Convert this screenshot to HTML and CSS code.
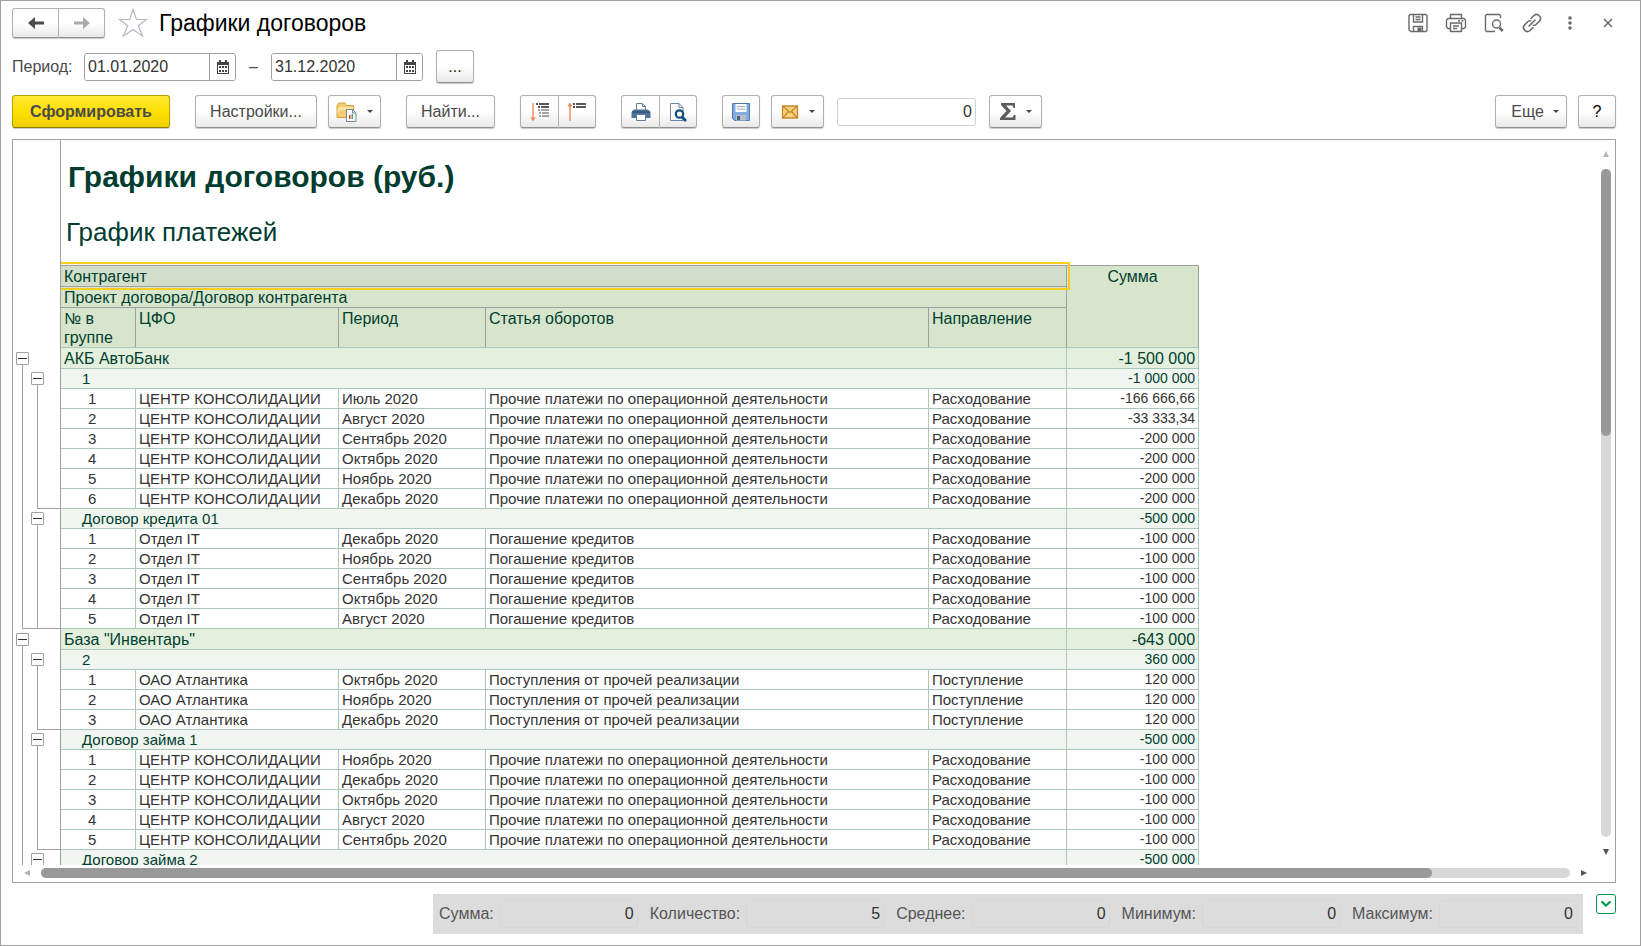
FILE: index.html
```html
<!DOCTYPE html>
<html lang="ru">
<head>
<meta charset="utf-8">
<title>Графики договоров</title>
<link rel="stylesheet" href="styles.css">
</head>
<body>
<main class="window">
  <header class="titlebar">
    <div class="btn-group nav">
      <button class="btn" type="button" aria-label="Назад"><svg width="18" height="14" viewBox="0 0 18 14"><path d="M1 7 8 1v4.500h9v3H8V13z" fill="#4a4a4a"/></svg></button>
      <button class="btn" type="button" aria-label="Вперед"><svg width="18" height="14" viewBox="0 0 18 14"><path d="M17 7 10 1v4.500H1v3h9V13z" fill="#ababab"/></svg></button>
    </div>
    <button class="icon-btn star" type="button" aria-label="Избранное"><svg width="30" height="30" viewBox="0 0 30 30"><path d="m15 1.500 3.400 10H28.500l-8.200 6.200 4.200 10.300-9.500-6.500-9.500 6.500 4.200-10.300L1.500 11.500h10.100z" fill="#fff" stroke="#b4bac2" stroke-width="1.200"/></svg></button>
    <h1 class="caption">Графики договоров</h1>
    <div class="window-tools">
      <button class="icon-btn" type="button" aria-label="Сохранить"><svg width="20" height="20" viewBox="0 0 20 20" fill="none" stroke="#6a6a6a" stroke-width="1.400"><path d="M2 1.500h16l1 1v15l-1 1H3l-2-1.500V2.500zM5.500 1.500v7.500h9V1.500M7.500 4h5M7.500 6.500h5M5.500 18.500v-5h9v5"/><path d="M9.500 14.500h4v3.500h-4z" fill="#6a6a6a" stroke="none"/></svg></button>
      <button class="icon-btn" type="button" aria-label="Печать"><svg width="22" height="20" viewBox="0 0 22 20" fill="none" stroke="#6a6a6a" stroke-width="1.400"><path d="M5.500 5.500v-4h11v4M5 15.500H3L1.500 14V7L3 5.500h16L20.500 7v7L19 15.500h-2M5.500 10h11v8.500h-11zM8 13h6M8 15.500h4M13 7.700h2M16.500 7.700h2"/></svg></button>
      <button class="icon-btn" type="button" aria-label="Предварительный просмотр"><svg width="20" height="20" viewBox="0 0 20 20" fill="none" stroke="#6a6a6a" stroke-width="1.400"><path d="M16.500 5v-2.500l-1-1H2.500l-1 1v15l1 1H11"/><circle cx="12.500" cy="11" r="4"/><path d="m15.500 14.500 3.200 3.500" stroke-width="2.600"/></svg></button>
      <button class="icon-btn" type="button" aria-label="Ссылка"><svg width="20" height="20" viewBox="0 0 20 20" fill="none" stroke="#6a6a6a" stroke-width="1.600" stroke-linecap="round"><path d="m7 13 6-6M9 5.500l3-3a3.900 3.900 0 0 1 5.500 5.500l-3.500 3.500a3 3 0 0 1-2.500.7M11 14.500l-3 3A3.900 3.900 0 0 1 2.500 12L6 8.500a3 3 0 0 1 2.500-.7"/></svg></button>
      <button class="icon-btn" type="button" aria-label="Меню"><svg width="6" height="16" viewBox="0 0 6 16" fill="#6a6a6a"><circle cx="3" cy="3" r="1.800"/><circle cx="3" cy="8" r="1.800"/><circle cx="3" cy="13" r="1.800"/></svg></button>
      <button class="icon-btn" type="button" aria-label="Закрыть"><svg width="10" height="10" viewBox="0 0 10 10" stroke="#6a6a6a" stroke-width="1.500"><path d="m1 1 8 8M9 1 1 9"/></svg></button>
    </div>
  </header>

  <div class="period">
    <label class="period-label" for="date-from">Период:</label>
    <div class="date-field">
      <input id="date-from" type="text" value="01.01.2020">
      <button type="button" aria-label="Выбрать начало периода"><svg width="12" height="14" viewBox="0 0 12 14"><path d="M0 2h12v12H0zM2 0h2v2H2zM8 0h2v2H8z" fill="#444"/><path d="M1 5h10v8H1z" fill="#fff"/><path d="M2 6h2v2H2zM5 6h2v2H5zM8 6h2v2H8zM2 10h2v2H2zM5 10h2v2H5zM8 10h2v2H8z" fill="#444"/></svg></button>
    </div>
    <span class="dash">–</span>
    <div class="date-field">
      <input id="date-to" type="text" value="31.12.2020" aria-label="Конец периода">
      <button type="button" aria-label="Выбрать конец периода"><svg width="12" height="14" viewBox="0 0 12 14"><path d="M0 2h12v12H0zM2 0h2v2H2zM8 0h2v2H8z" fill="#444"/><path d="M1 5h10v8H1z" fill="#fff"/><path d="M2 6h2v2H2zM5 6h2v2H5zM8 6h2v2H8zM2 10h2v2H2zM5 10h2v2H5zM8 10h2v2H8z" fill="#444"/></svg></button>
    </div>
    <button class="btn square more-dates" type="button">...</button>
  </div>

  <div class="toolbar">
    <button class="btn primary" type="button">Сформировать</button>
    <div class="tool-set">
      <button class="btn settings" type="button">Настройки...</button>
      <button class="btn drop" type="button" aria-label="Варианты отчета"><svg width="21" height="20" viewBox="0 0 21 20"><path d="M1 3.500 3 1h6l1.500 2.500H17.500V15.500H1z" fill="#f3cb70" stroke="#d0a040"/><path d="M1.500 7 4 5h13v3H4l-2.500 5z" fill="#fbe3a4"/><path d="M10.500 7.500h6l3.500 3.500v8.500h-9.500z" fill="#fff" stroke="#6c87a6"/><path d="M16.500 7.500V11H20" fill="none" stroke="#6c87a6"/><path d="M13 13h1.500v4H13z" fill="#e0352f"/><path d="M15.500 12H17v5h-1.500z" fill="#4fa14f"/></svg><span class="caret"></span></button>
    </div>
    <button class="btn find" type="button">Найти...</button>
    <div class="btn-group pair">
      <button class="btn" type="button" aria-label="Развернуть группы"><svg width="20" height="20" viewBox="0 0 20 20"><path d="M3 1v16" stroke="#f08050" stroke-width="1.300"/><path d="M.5 15.500h5L3 19.500z" fill="#f08050"/><g stroke-width="1.400"><path d="M6 2h13" stroke="#222" stroke-dasharray="2 1 10"/><path d="M8 5h11" stroke="#222" stroke-dasharray="2 1 8"/><path d="M8 8h11M9 11h10M9 14h10" stroke="#888" stroke-dasharray="2 1 8"/></g></svg></button>
      <button class="btn" type="button" aria-label="Свернуть группы"><svg width="20" height="20" viewBox="0 0 20 20"><path d="M3 3v16" stroke="#f08050" stroke-width="1.300"/><path d="M.5 4.500h5L3 .5z" fill="#f08050"/><path d="M6 2h13M6 5h13" stroke="#222" stroke-width="1.400" stroke-dasharray="2 1 10"/></svg></button>
    </div>
    <div class="btn-group pair">
      <button class="btn" type="button" aria-label="Печать"><svg width="20" height="20" viewBox="0 0 20 20"><path d="M5.500 9V1.500h6l3 3V9z" fill="#fff" stroke="#5f7d9c"/><path d="M11.500 1.500v3h3" fill="none" stroke="#5f7d9c"/><path d="M3 7.500h14l2.500 2.500v6H.5v-6z" fill="#4f7297"/><path d="M1 10h18" stroke="#2f5378" stroke-width="1.500"/><path d="M5.500 12.500h9v6h-9z" fill="#fff" stroke="#5f7d9c"/></svg></button>
      <button class="btn" type="button" aria-label="Предварительный просмотр"><svg width="20" height="20" viewBox="0 0 20 20"><path d="M2.500 1.500h8.500l4 4v13H2.500z" fill="#fff" stroke="#6c87a6"/><path d="M11 1.500v4h4" fill="none" stroke="#6c87a6"/><circle cx="11.500" cy="12" r="3.700" fill="#fff" stroke="#0d4f80" stroke-width="2.200"/><path d="m14 15 4 4" stroke="#0d4f80" stroke-width="2.800"/></svg></button>
    </div>
    <div class="tool-set">
      <button class="btn square" type="button" aria-label="Сохранить"><svg width="20" height="20" viewBox="0 0 20 20"><path d="M1.500 1.500h17v17h-15l-2-2z" fill="#82abe0" stroke="#4f78ad"/><path d="M4.500 2h11v8h-11z" fill="#fff"/><path d="M6 4.500h8M6 7h8" stroke="#9ab"/><path d="M5 13h10v5.500H5z" fill="#b8c0c8"/><path d="M6 14h3v4H6z" fill="#44617f"/></svg></button>
      <button class="btn drop" type="button" aria-label="Отправить по почте"><svg width="18" height="14" viewBox="0 0 18 14"><path d="M1.500 1h15v12h-15z" fill="#f8cf7a" stroke="#c4892a" stroke-width="1.300"/><path d="m2 1.500 7 6 7-6M2 12.500l5.500-6M16 12.500l-5.500-6" fill="none" stroke="#c4892a" stroke-width="1.200"/></svg><span class="caret"></span></button>
    </div>
    <input class="sum-field" type="text" value="0" aria-label="Сумма выделенных ячеек">
    <button class="btn drop sigma" type="button" aria-label="Итоги"><svg width="16" height="19" viewBox="0 0 16 19"><path d="M1 1h14v5h-1.500L12.500 3.500H6L11 9 5 15.500h7.500L14 13h1.500v5H0v-2l6.500-7L1 3z" fill="#5c5c5c"/></svg><span class="caret"></span></button>
    <div class="tool-set end">
      <button class="btn more" type="button">Еще<span class="caret"></span></button>
      <button class="btn square help" type="button">?</button>
    </div>
  </div>

  <section class="report">
    <div class="sheet">
      <div class="gutter">
        <div class="node"><button class="fold" type="button" aria-label="Свернуть"></button>
          <div class="branch">
            <div class="node"><button class="fold" type="button" aria-label="Свернуть"></button><div class="branch leaf rows-6"></div></div>
            <div class="node"><button class="fold" type="button" aria-label="Свернуть"></button><div class="branch leaf rows-5"></div></div>
          </div>
        </div>
        <div class="node"><button class="fold" type="button" aria-label="Свернуть"></button>
          <div class="branch">
            <div class="node"><button class="fold" type="button" aria-label="Свернуть"></button><div class="branch leaf rows-3"></div></div>
            <div class="node"><button class="fold" type="button" aria-label="Свернуть"></button><div class="branch leaf rows-5"></div></div>
            <div class="node"><button class="fold" type="button" aria-label="Свернуть"></button><div class="branch leaf rows-5"></div></div>
          </div>
        </div>
      </div>
      <div class="content">
        <h2 class="report-title">Графики договоров (руб.)</h2>
        <h3 class="report-subtitle">График платежей</h3>
        <table class="grid">
          <colgroup><col class="c-num"><col class="c-unit"><col class="c-period"><col class="c-item"><col class="c-dir"><col class="c-sum"></colgroup>
          <thead>
            <tr class="h-first"><th colspan="5" class="selected">Контрагент</th><th rowspan="3" class="h-sum">Сумма</th></tr>
            <tr class="h-second"><th colspan="5">Проект договора/Договор контрагента</th></tr>
            <tr class="h-third"><th>№ в группе</th><th>ЦФО</th><th>Период</th><th>Статья оборотов</th><th>Направление</th></tr>
          </thead>
          <tbody>
            <tr class="g1"><td colspan="5">АКБ АвтоБанк</td><td>-1 500 000</td></tr>
            <tr class="g2"><td colspan="5">1</td><td>-1 000 000</td></tr>
            <tr><td>1</td><td>ЦЕНТР КОНСОЛИДАЦИИ</td><td>Июль 2020</td><td>Прочие платежи по операционной деятельности</td><td>Расходование</td><td>-166 666,66</td></tr>
            <tr><td>2</td><td>ЦЕНТР КОНСОЛИДАЦИИ</td><td>Август 2020</td><td>Прочие платежи по операционной деятельности</td><td>Расходование</td><td>-33 333,34</td></tr>
            <tr><td>3</td><td>ЦЕНТР КОНСОЛИДАЦИИ</td><td>Сентябрь 2020</td><td>Прочие платежи по операционной деятельности</td><td>Расходование</td><td>-200 000</td></tr>
            <tr><td>4</td><td>ЦЕНТР КОНСОЛИДАЦИИ</td><td>Октябрь 2020</td><td>Прочие платежи по операционной деятельности</td><td>Расходование</td><td>-200 000</td></tr>
            <tr><td>5</td><td>ЦЕНТР КОНСОЛИДАЦИИ</td><td>Ноябрь 2020</td><td>Прочие платежи по операционной деятельности</td><td>Расходование</td><td>-200 000</td></tr>
            <tr><td>6</td><td>ЦЕНТР КОНСОЛИДАЦИИ</td><td>Декабрь 2020</td><td>Прочие платежи по операционной деятельности</td><td>Расходование</td><td>-200 000</td></tr>
            <tr class="g2"><td colspan="5">Договор кредита 01</td><td>-500 000</td></tr>
            <tr><td>1</td><td>Отдел IT</td><td>Декабрь 2020</td><td>Погашение кредитов</td><td>Расходование</td><td>-100 000</td></tr>
            <tr><td>2</td><td>Отдел IT</td><td>Ноябрь 2020</td><td>Погашение кредитов</td><td>Расходование</td><td>-100 000</td></tr>
            <tr><td>3</td><td>Отдел IT</td><td>Сентябрь 2020</td><td>Погашение кредитов</td><td>Расходование</td><td>-100 000</td></tr>
            <tr><td>4</td><td>Отдел IT</td><td>Октябрь 2020</td><td>Погашение кредитов</td><td>Расходование</td><td>-100 000</td></tr>
            <tr><td>5</td><td>Отдел IT</td><td>Август 2020</td><td>Погашение кредитов</td><td>Расходование</td><td>-100 000</td></tr>
            <tr class="g1"><td colspan="5">База "Инвентарь"</td><td>-643 000</td></tr>
            <tr class="g2"><td colspan="5">2</td><td>360 000</td></tr>
            <tr><td>1</td><td>ОАО Атлантика</td><td>Октябрь 2020</td><td>Поступления от прочей реализации</td><td>Поступление</td><td>120 000</td></tr>
            <tr><td>2</td><td>ОАО Атлантика</td><td>Ноябрь 2020</td><td>Поступления от прочей реализации</td><td>Поступление</td><td>120 000</td></tr>
            <tr><td>3</td><td>ОАО Атлантика</td><td>Декабрь 2020</td><td>Поступления от прочей реализации</td><td>Поступление</td><td>120 000</td></tr>
            <tr class="g2"><td colspan="5">Договор займа 1</td><td>-500 000</td></tr>
            <tr><td>1</td><td>ЦЕНТР КОНСОЛИДАЦИИ</td><td>Ноябрь 2020</td><td>Прочие платежи по операционной деятельности</td><td>Расходование</td><td>-100 000</td></tr>
            <tr><td>2</td><td>ЦЕНТР КОНСОЛИДАЦИИ</td><td>Декабрь 2020</td><td>Прочие платежи по операционной деятельности</td><td>Расходование</td><td>-100 000</td></tr>
            <tr><td>3</td><td>ЦЕНТР КОНСОЛИДАЦИИ</td><td>Октябрь 2020</td><td>Прочие платежи по операционной деятельности</td><td>Расходование</td><td>-100 000</td></tr>
            <tr><td>4</td><td>ЦЕНТР КОНСОЛИДАЦИИ</td><td>Август 2020</td><td>Прочие платежи по операционной деятельности</td><td>Расходование</td><td>-100 000</td></tr>
            <tr><td>5</td><td>ЦЕНТР КОНСОЛИДАЦИИ</td><td>Сентябрь 2020</td><td>Прочие платежи по операционной деятельности</td><td>Расходование</td><td>-100 000</td></tr>
            <tr class="g2"><td colspan="5">Договор займа 2</td><td>-500 000</td></tr>
          </tbody>
        </table>
      </div>
    </div>
    <div class="vscroll">
      <svg class="arrow" width="6" height="6" viewBox="0 0 6 6"><path d="M3 0 6 6H0z" fill="#b4b4b4"/></svg>
      <div class="track"><div class="thumb"></div></div>
      <svg class="arrow" width="6" height="6" viewBox="0 0 6 6"><path d="M3 6 6 0H0z" fill="#555"/></svg>
    </div>
    <div class="hscroll">
      <svg class="arrow" width="6" height="6" viewBox="0 0 6 6"><path d="M0 3 6 0v6z" fill="#b4b4b4"/></svg>
      <div class="track"><div class="thumb"></div></div>
      <svg class="arrow" width="6" height="6" viewBox="0 0 6 6"><path d="M6 3 0 0v6z" fill="#555"/></svg>
    </div>
  </section>

  <footer class="status">
    <div class="totals">
      <label for="t-sum">Сумма:</label><input id="t-sum" type="text" value="0" readonly>
      <label for="t-count">Количество:</label><input id="t-count" type="text" value="5" readonly>
      <label for="t-avg">Среднее:</label><input id="t-avg" type="text" value="0" readonly>
      <label for="t-min">Минимум:</label><input id="t-min" type="text" value="0" readonly>
      <label for="t-max">Максимум:</label><input id="t-max" type="text" value="0" readonly>
    </div>
    <button class="collapse" type="button" aria-label="Скрыть итоги"><svg width="12" height="8" viewBox="0 0 12 8"><path d="m1.500 1.500 4.500 4 4.500-4" fill="none" stroke="#009846" stroke-width="2.200"/></svg></button>
  </footer>
</main>
</body>
</html>
```
FILE: styles.css
```css
* { box-sizing: border-box; }

body {
  margin: 0;
  font-family: "Liberation Sans", Arial, sans-serif;
  font-size: 16px;
  color: #4a4a4a;
  background: #fff;
}

button, input { font: inherit; color: inherit; margin: 0; }
svg { display: block; flex: none; }

.window {
  display: flex;
  flex-direction: column;
  height: 100vh;
  border: 1px solid #a0a0a0;
  padding: 7px 24px 11px 11px;
}

/* buttons */
.btn {
  display: inline-flex;
  align-items: center;
  justify-content: center;
  height: 33px;
  padding: 0;
  border: 1px solid #b0b0b0;
  border-bottom-color: #909090;
  border-radius: 3px;
  background: linear-gradient(#fff 50%, #e9e9e9);
  box-shadow: 0 1px 1px #c8c8c8;
}
.btn.square { width: 38px; }
.btn-group { display: flex; }
.btn-group .btn:first-child { border-radius: 3px 0 0 3px; }
.btn-group .btn:last-child { border-radius: 0 3px 3px 0; border-left: 0; }
.icon-btn {
  display: flex;
  align-items: center;
  justify-content: center;
  padding: 0;
  border: 0;
  background: none;
}
.caret {
  border: 3px solid transparent;
  border-top-color: #444;
  border-bottom: 0;
}

/* title bar */
.titlebar { display: flex; align-items: center; height: 30px; margin-right: -11px; }
.nav .btn { width: 46px; height: 30px; }
.nav .btn:first-child { width: 47px; }
.star { width: 30px; margin-left: 13px; }
.caption { margin: 0 0 0 11px; font-size: 23px; font-weight: 400; line-height: 28px; color: #000; }
.window-tools { display: flex; margin-left: auto; }
.window-tools .icon-btn { width: 38px; height: 28px; }

/* period */
.period { display: flex; align-items: center; height: 33px; margin-top: 12px; }
.period-label { width: 72px; }
.date-field {
  display: flex;
  width: 152px;
  height: 28px;
  border: 1px solid #a0a0a0;
  border-radius: 3px;
  overflow: hidden;
}
.date-field input { flex: 1; min-width: 0; padding: 0 3px; border: 0; color: #333; outline: 0; }
.date-field button {
  display: flex;
  align-items: center;
  justify-content: center;
  width: 26px;
  padding: 0;
  border: 0;
  border-left: 1px solid #a0a0a0;
  background: #fff;
}
.dash { width: 35px; text-align: center; }
.more-dates { margin-left: 13px; color: #222; }

/* toolbar */
.toolbar { display: flex; align-items: center; gap: 25px; margin-top: 12px; }
.tool-set { display: flex; gap: 11px; }
.tool-set.end { margin-left: auto; }
.primary {
  width: 158px;
  border-color: #b8a000;
  border-bottom-color: #8f7d00;
  background: linear-gradient(#ffe838, #ffe000 50%, #f0cf00);
  font-weight: 700;
}
.settings { width: 122px; }
.find { width: 89px; }
.drop { width: 53px; gap: 10px; }
.pair .btn { width: 37px; }
.pair .btn:first-child { width: 39px; }
.sum-field {
  width: 139px;
  height: 28px;
  margin: 0 -12px;
  padding: 0 3px;
  border: 1px solid #d0d0d0;
  border-radius: 3px;
  text-align: right;
  color: #333;
}
.more { width: 72px; gap: 9px; padding-left: 8px; }
.help { color: #000; }

/* report area */
.report {
  flex: 1;
  min-height: 0;
  display: grid;
  grid-template-columns: minmax(0, 1fr) 18px;
  grid-template-rows: minmax(0, 1fr) 17px;
  margin-top: 11px;
  border: 1px solid #a0a0a0;
}
.sheet { display: flex; overflow: hidden; }

.gutter {
  flex: none;
  width: 48px;
  height: max-content;
  min-height: 100%;
  padding: 212px 0 0 3px;
  border-right: 1px solid #a0a0a0;
}
.fold {
  display: block;
  width: 13px;
  height: 13px;
  padding: 0;
  border: 1px solid #a0a0a0;
  border-radius: 1px;
  background: linear-gradient(#333, #333) center / 9px 1px no-repeat #fff;
}
.branch {
  margin-left: 6px;
  padding: 7px 0 0 8px;
  border: solid #a0a0a0;
  border-width: 0 0 1px 1px;
}
.node + .node { margin-top: 4px; }
.branch .node + .node { margin-top: 3px; }
.leaf { padding: 0; }
.rows-3 { height: 64px; }
.rows-5 { height: 104px; }
.rows-6 { height: 124px; }
.node .node:last-child > .leaf { border-bottom: 0; margin-bottom: -1px; }

.content { flex: 1; min-width: 0; height: max-content; overflow: hidden; }
.report-title {
  margin: 0;
  padding: 19px 0 0 7px;
  font-size: 30px;
  line-height: 36px;
  color: #003c30;
}
.report-subtitle {
  margin: 0;
  padding: 22px 0 18px 5px;
  font-size: 26px;
  font-weight: 400;
  line-height: 30px;
  color: #003c30;
}

.grid { table-layout: fixed; width: 1138px; border-collapse: separate; border-spacing: 0; color: #333; }
.c-num { width: 75px; }
.c-unit { width: 203px; }
.c-period { width: 147px; }
.c-item { width: 443px; }
.c-dir { width: 138px; }
.c-sum { width: 132px; }
.grid th, .grid td {
  height: 20px;
  padding: 0 3px;
  border: solid #a9c8bb;
  border-width: 0 1px 1px 0;
  font-size: 15px;
  line-height: 19px;
  white-space: nowrap;
  text-align: left;
  vertical-align: top;
}
.grid th {
  height: 21px;
  padding-top: 1px;
  border-color: #a0a0a0;
  background: #d8e5cd;
  color: #00402f;
  font-size: 16px;
  font-weight: 400;
  white-space: normal;
}
.grid .h-first th { height: 22px; border-top-width: 1px; }
.grid .h-third th { height: 40px; border-bottom-color: #a9c8bb; }
.grid .h-first .h-sum { text-align: center; border-bottom-color: #a9c8bb; }
.grid .selected {
  background: #d2dec9;
  outline: 2px solid #fccc20;
  outline-offset: 1px;
  box-shadow: 0 0 0 1px #f4f6ee;
}
.grid td:first-child { padding-left: 27px; }
.grid td:last-child { text-align: right; font-size: 14px; }
.grid .g1 td { height: 21px; padding: 1px 3px 0; background: #e4f0dd; color: #00402f; font-size: 16px; }
.grid .g2 td { background: #f0f5ef; color: #00402f; }
.grid .g2 td:first-child { padding-left: 21px; }

/* scroll bars */
.vscroll, .hscroll { display: flex; align-items: center; }
.track { flex: 1; border-radius: 5px; background: #d8d8d8; }
.thumb { border-radius: 5px; background: #999; }
.vscroll { flex-direction: column; gap: 12px; padding: 11px 0 10px; }
.vscroll .track { width: 10px; }
.vscroll .thumb { height: 40%; }
.hscroll { gap: 11px; padding: 0 10px 2px 11px; }
.hscroll .track { height: 10px; }
.hscroll .thumb { width: 91%; height: 10px; }

/* status */
.status { display: flex; justify-content: flex-end; align-items: flex-start; gap: 13px; margin-top: 11px; }
.totals { display: flex; align-items: center; height: 40px; padding: 0 6px; background: #dcdcdc; color: #555; }
.totals input {
  width: 138px;
  height: 28px;
  margin: 0 12px 0 6px;
  padding: 0 3px;
  border: 1px solid #d6d6d6;
  border-radius: 3px;
  background: transparent;
  color: #333;
  text-align: right;
}
.totals input:last-child { margin-right: 0; }
.collapse {
  display: flex;
  align-items: center;
  justify-content: center;
  width: 20px;
  height: 20px;
  padding: 0;
  border: 1px solid #009846;
  border-radius: 3px;
  background: #fff;
}
```
